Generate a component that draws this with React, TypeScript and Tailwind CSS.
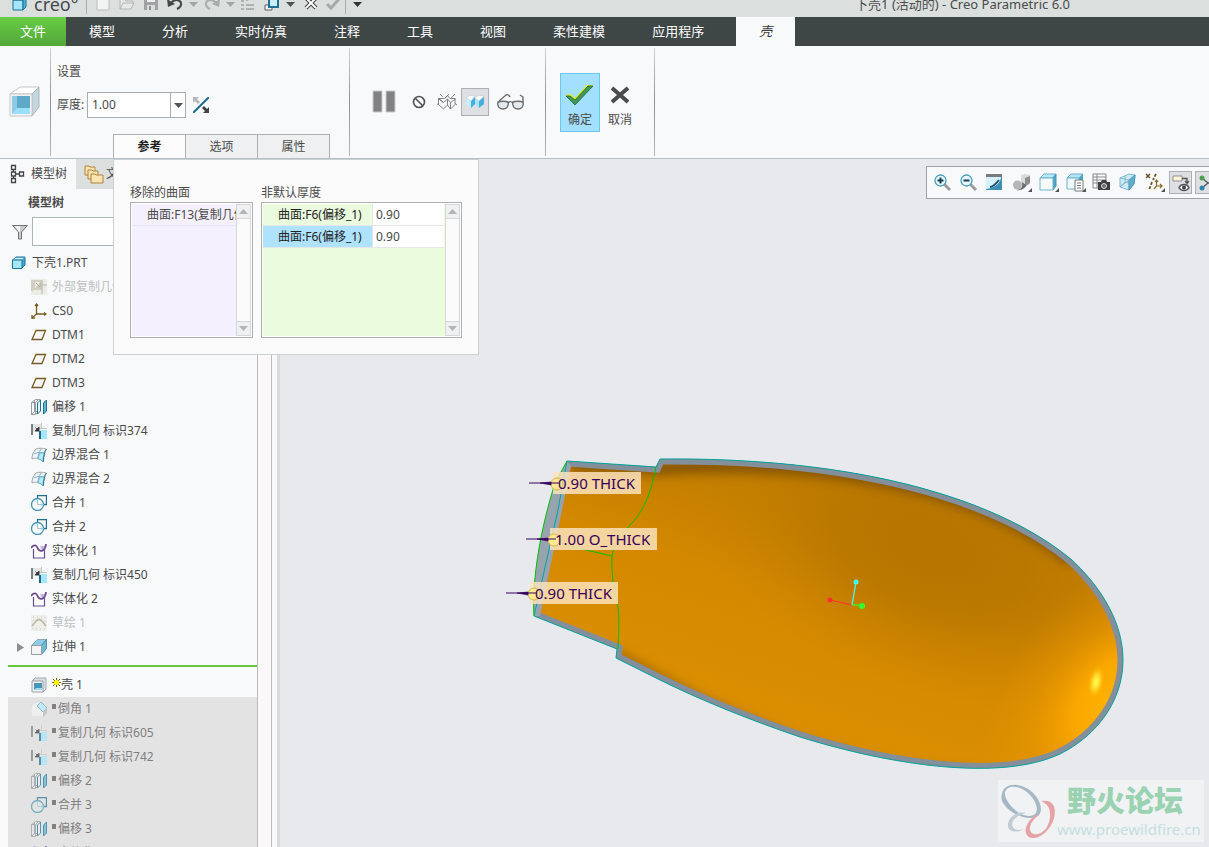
import type { ReactNode } from 'react';

export default function App() {
  return (
    <div className="flex h-screen flex-col overflow-hidden bg-[#f8f9fb] font-['Noto_Sans','Noto_Sans_CJK_SC',sans-serif] text-xs text-[#4a4a4a]">
      <TitleBar />
      <MenuBar />
      <Ribbon />
      <div className="flex min-h-0 flex-1">
        <Sidebar />
        <Viewport />
      </div>
    </div>
  );
}

/* ---------- Title bar ---------- */

function TitleBar() {
  return (
    <header className="flex h-[17px] shrink-0 items-end bg-[#dbe0df]">
      <div className="flex h-[26px] w-full items-center">
        <svg width="16" height="16" viewBox="0 0 16 16" className="ml-3 shrink-0">
          <path d="M1 4h10v10H1z" fill="#a6e6fb" stroke="#1b7396" />
          <path d="M11 4l3-3v10l-3 3z" fill="#4fb3d8" stroke="#1b7396" />
          <path d="M1 4l3-3h10l-3 3z" fill="#d5f3fc" stroke="#1b7396" />
        </svg>
        <span className="ml-[6px] w-[52px] text-[18px] leading-5 text-[#45494b]">creo°</span>
        <Divider />
        <QuickButton label="新建" className="ml-2">
          <path d="M2 0h12v14H2z" fill="#f3f3f3" stroke="#b9bcbc" />
        </QuickButton>
        <QuickButton label="打开" className="ml-2">
          <path d="M1 13V3h5l1 2h7v3M1 13l3-6h11l-3 6z" fill="#e6e8e8" stroke="#b4b8b8" />
        </QuickButton>
        <QuickButton label="保存" className="ml-2">
          <path d="M1 0h14v14H1z" fill="#9fa2a3" />
          <path d="M4 0h8v6H4z" fill="#eceeee" />
          <path d="M4 9h8v5H4z" fill="#d9dcdc" />
          <path d="M6 10h2v4H6z" fill="#8c8f90" />
        </QuickButton>
        <QuickButton label="撤消" className="ml-2">
          <path d="M4 7c4-5 11-3 10 2-.4 2-2 3-4 4" fill="none" stroke="#44484a" strokeWidth="2" />
          <path d="M0 3l1 8 7-3z" fill="#44484a" />
        </QuickButton>
        <Caret className="ml-[6px] text-[#a3a7a7]" />
        <QuickButton label="重做" className="ml-[6px]">
          <path d="M12 7C8 2 1 4 2 9c.4 2 2 3 4 4" fill="none" stroke="#a9adad" strokeWidth="2" />
          <path d="M16 3l-1 8-7-3z" fill="#a9adad" />
        </QuickButton>
        <Caret className="ml-[6px] text-[#a3a7a7]" />
        <QuickButton label="重新生成" className="ml-1">
          <path d="M2 9h3M2 13h3M7 9h8M7 13h8M2 5h3M8 5c1-4 6-4 7-1" fill="none" stroke="#adb1b1" strokeWidth="2" />
        </QuickButton>
        <QuickButton label="窗口" className="ml-[9px]">
          <path d="M1 9h7v5H1z" fill="#f4f4f4" stroke="#5c6062" />
          <path d="M5 3h9v8H5z" fill="#c9eefb" stroke="#1f6f93" strokeWidth="2" />
        </QuickButton>
        <Caret className="ml-[6px] text-[#505456]" />
        <QuickButton label="关闭" className="ml-2">
          <path d="M3 2l10 10M13 2L3 12" stroke="#3f4345" strokeWidth="4" />
          <path d="M3 2l10 10M13 2L3 12" stroke="#fff" strokeWidth="2" />
        </QuickButton>
        <QuickButton label="完成" className="ml-[6px]">
          <path d="M2 8l4 4 8-9" fill="none" stroke="#a6aaaa" strokeWidth="3" />
        </QuickButton>
        <div className="ml-1">
          <Divider />
        </div>
        <Caret className="ml-[7px] text-[#303436]" />
        <span className="mr-[139px] ml-auto text-[13px] leading-5 whitespace-nowrap">
          下壳1 (活动的) - Creo Parametric 6.0
        </span>
      </div>
    </header>
  );
}

function Divider() {
  return <div className="h-5 w-px bg-[#a9adae]" />;
}

function QuickButton({ label, className, children }: { label: string; className: string; children: ReactNode }) {
  return (
    <button aria-label={label} className={`shrink-0 ${className}`}>
      <svg width="16" height="16" viewBox="0 0 16 16">
        {children}
      </svg>
    </button>
  );
}

function Caret({ className }: { className: string }) {
  return (
    <svg width="9" height="5" viewBox="0 0 9 5" className={`shrink-0 ${className}`}>
      <path d="M0 0h9L4.500 5z" fill="currentColor" />
    </svg>
  );
}

/* ---------- Menu ---------- */

const MENU = ['模型', '分析', '实时仿真', '注释', '工具', '视图', '柔性建模', '应用程序'];

function MenuBar() {
  return (
    <nav className="flex h-[29px] shrink-0 bg-[#3e4646] text-[13px] text-white">
      <button className="bg-gradient-to-b from-[#68cc45] to-[#52a838] px-5">文件</button>
      {MENU.map((item) => (
        <button key={item} className="pr-6 pl-[23px]">
          {item}
        </button>
      ))}
      <button className="ml-2 bg-[#f8f9fb] px-[23px] text-[#3c3c3c] italic">壳</button>
    </nav>
  );
}

/* ---------- Ribbon ---------- */

function Separator() {
  return <div className="my-[2px] w-px bg-gradient-to-b from-[#cfd1d3] via-[#8f9294] to-[#b5b8ba]" />;
}

function Ribbon() {
  return (
    <section className="flex h-[113px] shrink-0 border-b border-[#b3bfc2]">
      <div className="flex w-[50px] items-center justify-center">
        <svg width="32" height="32" viewBox="0 0 32 32">
          <path d="M1 8L11 1h19l-7 7z" fill="#fff" stroke="#c3c6c8" />
          <path d="M23 8l7-7v20l-7 9z" fill="#c4d6de" stroke="#aab6bb" />
          <path d="M1 8h22v22H1z" fill="#f4f4f5" stroke="#c6c6c8" />
          <path d="M3 10h18v18H3z" fill="#8fc9e4" />
          <path d="M8 10h13v12H8z" fill="#5fa9c8" />
          <path d="M3 28l5-6h13v6z" fill="#9be0fb" />
        </svg>
      </div>
      <Separator />

      {/* Settings */}
      <div className="flex flex-col pt-[17px] pr-[19px] pl-[6px]">
        <h2 className="leading-[18px]">设置</h2>
        <div className="mt-[11px] flex h-[26px] items-center">
          <label htmlFor="thickness" className="w-[30px]">
            厚度:
          </label>
          <div className="flex h-full border border-[#a9acae] bg-white">
            <input id="thickness" defaultValue="1.00" className="w-[82px] px-1 outline-none" />
            <button aria-label="厚度列表" className="flex w-[15px] items-center justify-center border-l border-[#a9acae]">
              <Caret className="text-[#505456]" />
            </button>
          </div>
          <button aria-label="反向" className="ml-[7px]">
            <svg width="16" height="16" viewBox="0 0 16 16">
              <path d="M0 16L16 0" stroke="#1c6b8c" strokeWidth="2" />
              <path d="M0 0h6L4 2l3 3-2 2-3-3-2 2z" fill="#b5b7b8" />
              <path d="M16 16h-6l2-2-3-3 2-2 3 3 2-2z" fill="#3f4345" />
            </svg>
          </button>
        </div>
        <div className="relative mt-auto ml-[56px]">
          <div className="flex" role="tablist">
            <PanelTab label="参考" active />
            <PanelTab label="选项" />
            <PanelTab label="属性" />
            <div className="border-l border-[#adafb0]" />
          </div>
          <ReferencePanel />
        </div>
      </div>
      <Separator />

      {/* Preview controls */}
      <div className="flex items-center pr-3 pl-[22px]">
        <button aria-label="暂停" className="mr-[9px]">
          <svg width="24" height="24" viewBox="0 0 24 24">
            <path d="M1 1h9v21H1zM14 1h9v21h-9z" fill="#828284" stroke="#c9c9cb" />
          </svg>
        </button>
        <button aria-label="无预览" className="flex size-7 items-center justify-center">
          <svg width="14" height="14" viewBox="0 0 14 14" fill="none" stroke="#505456" strokeWidth="1.600">
            <circle cx="7" cy="7" r="5.500" />
            <path d="M3.500 3.500l7 7" />
          </svg>
        </button>
        <button aria-label="分离" className="flex size-7 items-center justify-center">
          <svg width="20" height="18" viewBox="0 0 20 18" fill="none" stroke="#66696b" strokeWidth=".8">
            <path d="M1.500 5.500h6l3-3M1.500 5.500v6l5 4.500 4-4V6l-4 3.500zM10.500 6l3 3.500L18.500 6M13.500 9.500V16l4.500-4.500v-6h-5l-2.500-3M10.500 12l3 4M3 1l3 3M18 1l-4 4M0 11.500l2-1M20 12l-2-1.500M12 1l-4 4.500M6.500 9.500l-5-4" />
          </svg>
        </button>
        <button aria-label="连接" className="flex size-7 items-center justify-center border border-[#adb0b2] bg-[#dedfe2]">
          <svg width="20" height="16" viewBox="0 0 20 16">
            <path d="M1 4l5 3v7l-5-3z" fill="#c5effc" />
            <path d="M6 7l4-4v7l-4 4z" fill="#45aede" />
            <path d="M10 4l4 3v7l-4-4z" fill="#a9e5fa" />
            <path d="M14 7l5-4v7l-5 4z" fill="#45aede" />
            <path d="M1 3.500l4-2h5L6 7zM10 3.500l4-2h5L14 7z" fill="#fff" stroke="#b9c3c8" strokeWidth=".5" />
          </svg>
        </button>
        <button aria-label="检验" className="flex w-11 items-center justify-center">
          <svg width="28" height="18" viewBox="0 0 28 18" fill="#e3eaef" stroke="#6a6e71" strokeWidth="1.400">
            <path d="M1 9c2-1 8-1 10 0 1 5-2 7-5 7s-6-2-5-7zM16 9c2-1 8-1 10 0 1 5-2 7-5 7s-6-2-5-7z" />
            <path d="M2 8l7-6c2-1 3 0 4 2M11 10c2-2 3-2 5 0M26 9V4l-3-2" fill="none" />
          </svg>
        </button>
      </div>
      <Separator />

      <div className="flex items-center px-[14px]">
        <button className="flex h-[59px] w-10 flex-col items-center justify-end border border-[#6cc6f5] bg-[#a3dffe] pb-[2px]">
          <svg width="30" height="22" viewBox="0 0 30 22">
            <path d="M1 11l4-1 5 4L22 1h6L11 19z" fill="#e4ee00" />
            <path d="M1 12h4l5 4L23 2h5L10 21z" fill="#3d9957" stroke="#2c5f3c" strokeWidth=".8" />
          </svg>
          <span className="mt-[5px] leading-[18px]">确定</span>
        </button>
        <button className="flex h-[59px] w-10 flex-col items-center justify-end pb-[3px]">
          <svg width="20" height="18" viewBox="0 0 20 18">
            <path d="M2 2l16 14M18 2L2 16" stroke="#4b4b4d" strokeWidth="4" />
          </svg>
          <span className="mt-[7px] leading-[18px]">取消</span>
        </button>
      </div>
      <Separator />
    </section>
  );
}

function PanelTab({ label, active }: { label: string; active?: boolean }) {
  return (
    <button
      role="tab"
      aria-selected={!!active}
      className={`h-6 w-[72px] border-t border-l border-[#adafb0] ${
        active ? 'bg-[#fcfcfc] font-semibold text-[#1f1f1f]' : 'bg-[#eef0f2]'
      }`}
    >
      {label}
    </button>
  );
}

function ReferencePanel() {
  return (
    <div className="absolute top-full left-0 z-10 mt-px flex gap-2 border border-[#cdd1d3] bg-[#fbfbfb] px-4 pt-6 pb-4">
      <div>
        <h3 className="leading-[18px]">移除的曲面</h3>
        <div className="flex h-[136px] w-[123px] border border-[#adafb0] bg-white p-px">
          <ul className="min-w-0 flex-1 bg-[#f4f0fe]">
            <li className="h-[22px] overflow-hidden border-b border-[#e6e6f0] pl-[15px] leading-[21px] whitespace-nowrap">
              曲面:F13(复制几何)
            </li>
          </ul>
          <ScrollBar />
        </div>
      </div>
      <div>
        <h3 className="leading-[18px]">非默认厚度</h3>
        <div className="flex h-[136px] w-[201px] border border-[#adafb0] bg-white p-px">
          <div className="flex-1 bg-[#eafbde]">
            <table className="border-separate border-spacing-0 text-left text-[#222]">
              <tbody>
                <SurfaceRow name="曲面:F6(偏移_1)" value="0.90" />
                <SurfaceRow name="曲面:F6(偏移_1)" value="0.90" selected />
              </tbody>
            </table>
          </div>
          <ScrollBar />
        </div>
      </div>
    </div>
  );
}

function SurfaceRow({ name, value, selected }: { name: string; value: string; selected?: boolean }) {
  return (
    <tr>
      <td className={`w-[109px] border-b border-[#e4e8ea] pl-[15px] leading-[21px] ${selected ? 'bg-[#aee2ff]' : ''}`}>
        {name}
      </td>
      <td className="w-[72px] border-b border-l border-[#e4e8ea] bg-white pl-[3px] leading-[21px] text-[#4a4a4a]">
        {value}
      </td>
    </tr>
  );
}

function ScrollBar() {
  return (
    <div className="flex w-[15px] shrink-0 flex-col justify-between border border-[#d5d7d9] bg-[#fbfbfb]">
      <button aria-label="向上滚动" className="flex h-[14px] items-center justify-center border-b border-[#d5d7d9] bg-[#eff0f2]">
        <Caret className="rotate-180 text-[#b2b4b6]" />
      </button>
      <button aria-label="向下滚动" className="flex h-[14px] items-center justify-center border-t border-[#d5d7d9] bg-[#eff0f2]">
        <Caret className="text-[#b2b4b6]" />
      </button>
    </div>
  );
}

/* ---------- Model tree ---------- */

type Kind =
  | 'external'
  | 'csys'
  | 'plane'
  | 'offset'
  | 'copy'
  | 'blend'
  | 'merge'
  | 'solid'
  | 'sketch'
  | 'extrude'
  | 'shell'
  | 'chamfer';

interface TreeNode {
  kind: Kind;
  name: string;
  muted?: boolean;
  expandable?: boolean;
}

const ACTIVE: TreeNode[] = [
  { kind: 'external', name: '外部复制几何', muted: true },
  { kind: 'csys', name: 'CS0' },
  { kind: 'plane', name: 'DTM1' },
  { kind: 'plane', name: 'DTM2' },
  { kind: 'plane', name: 'DTM3' },
  { kind: 'offset', name: '偏移 1' },
  { kind: 'copy', name: '复制几何 标识374' },
  { kind: 'blend', name: '边界混合 1' },
  { kind: 'blend', name: '边界混合 2' },
  { kind: 'merge', name: '合并 1' },
  { kind: 'merge', name: '合并 2' },
  { kind: 'solid', name: '实体化 1' },
  { kind: 'copy', name: '复制几何 标识450' },
  { kind: 'solid', name: '实体化 2' },
  { kind: 'sketch', name: '草绘 1', muted: true },
  { kind: 'extrude', name: '拉伸 1', expandable: true },
];

const SUPPRESSED: TreeNode[] = [
  { kind: 'chamfer', name: '倒角 1' },
  { kind: 'copy', name: '复制几何 标识605' },
  { kind: 'copy', name: '复制几何 标识742' },
  { kind: 'offset', name: '偏移 2' },
  { kind: 'merge', name: '合并 3' },
  { kind: 'offset', name: '偏移 3' },
  { kind: 'solid', name: '实体化 3' },
];

const ICONS: Record<Kind, ReactNode> = {
  external: (
    <>
      <path d="M0 0h16v16H0z" fill="#ecece6" />
      <path d="M1 1v11M3 2h7v8H3zM11 1v14M11 6h5" fill="none" stroke="#c6c5b6" strokeWidth="1.500" />
      <path d="M5 4l4 4M9 4v4H5" stroke="#a9a899" fill="none" />
    </>
  ),
  csys: (
    <g fill="none" stroke="#7a5a22" strokeWidth="1.300">
      <path d="M5.500 1v10H15M5.500 11L1 15" />
      <path d="M4 3l1.500-2L7 3M13 9.500l2 1.500-2 1.500M1 12v3h3" />
    </g>
  ),
  plane: <path d="M5 3.500h9.500L11 12.500H1z" fill="none" stroke="#7a5a22" strokeWidth="1.300" />,
  offset: (
    <>
      <path d="M.5 3.500l4-3h5M.5 3.500v12h4l3-3M4.500 15.500v-12h-4M4.500 3.500l3-3M3.500 1.500v11h4M3.500 12.500l-3 3" fill="none" stroke="#8f9396" strokeWidth=".9" />
      <path d="M6.500 4L9.500 1v11l-3 3z" fill="#e3f4fa" stroke="#1f6f93" />
      <path d="M12.500 4L15.500 1v11l-3 3z" fill="#5fb4d8" stroke="#1f6f93" />
    </>
  ),
  copy: (
    <>
      <path d="M2 1h8v8H2z" fill="#e2e4e4" />
      <path d="M0 1h2v11H0z" fill="#7c8082" />
      <path d="M10.500 0v6M8 5.500h8" stroke="#c3c6c7" />
      <path d="M4.500 4.500l3 3M8 4v4H4z" stroke="#303436" fill="#303436" strokeWidth=".8" />
      <path d="M8 8h2v8H8z" fill="#1c6b8c" />
      <path d="M10 7h6v9h-6z" fill="#a6e6fb" />
    </>
  ),
  blend: (
    <>
      <path d="M5 2c3-1 7-1 10 0-2 3-3 8-3 13-2-3-7-5-11-3 0-4 1-7 4-10z" fill="#eef4f7" stroke="#a3a8ab" />
      <path d="M9 6c2-1 4 0 5 1-2 3-2 5-2 8-1-2-3-3-5-3 0-2 1-4 2-6z" fill="#b4e8fa" stroke="#5aa5c2" strokeWidth=".8" />
      <path d="M3 7c3-2 8-2 11 0M10 2C8 5 7 8 7 12" fill="none" stroke="#7fb3c8" />
      <path d="M15.500 2c-2 3-3 7-3 12.500" fill="none" stroke="#1f6f93" />
    </>
  ),
  merge: (
    <g fill="none">
      <path d="M6.500 3.500v-3h9v9h-3" stroke="#1f6f93" strokeWidth="1.300" />
      <circle cx="6.500" cy="9.500" r="6" stroke="#4a98b8" strokeWidth="1.300" />
      <path d="M6.500 4v5.500h6" stroke="#9dc9dc" />
    </g>
  ),
  solid: (
    <>
      <path d="M2.500 6v9h11V6" fill="#fff" stroke="#6b4a94" strokeWidth="1.200" />
      <path d="M9 3h5v4l-3 1z" fill="#c9b8de" />
      <path d="M0 5c4-5 6-2 7 1 2 3 7 3 8-5" fill="none" stroke="#6b4a94" strokeWidth="1.800" />
    </>
  ),
  sketch: (
    <>
      <path d="M0 0h16v16H0z" fill="#eeeeea" />
      <path d="M2 2h12v12H2z" fill="none" stroke="#c8c7bb" strokeDasharray="1 3" />
      <path d="M1 11l4-5c2-2 4-2 6 0l4 5" fill="none" stroke="#c0bda4" strokeWidth="1.800" />
    </>
  ),
  extrude: (
    <>
      <path d="M.5 6.500l6-6h9l-5 6z" fill="#8ecde6" stroke="#8fa9b3" />
      <path d="M10.500 6.500l5-6v9l-5 6z" fill="#6fb7d4" stroke="#4b8fab" />
      <path d="M.5 6.500h10v9H.5z" fill="#f5f5f5" stroke="#9a9ea1" />
    </>
  ),
  shell: (
    <>
      <path d="M1 4l3-3h11v11l-3 3" fill="#d8dfe3" stroke="#a4a9ac" />
      <path d="M1 4h11v11H1z" fill="#f2f2f2" stroke="#9da2a5" />
      <path d="M3 6h8v7H3z" fill="#4796b8" />
      <path d="M3 13l2-2h6v2z" fill="#9fdcf3" />
    </>
  ),
  chamfer: (
    <>
      <path d="M0 5l5-4h4l6 6v6l-3 3H0z" fill="#f4f4f4" stroke="#cbcdce" strokeWidth=".7" />
      <path d="M6 5l4-4 6 6-4 4z" fill="#b6ecfc" stroke="#69abc4" />
      <path d="M12 11v5l4-4V7z" fill="#b9bcbd" />
    </>
  ),
};

function TreeItem({ node, marker, dimmed }: { node: TreeNode; marker?: ReactNode; dimmed?: boolean }) {
  return (
    <li className={`flex h-6 items-center pl-[7px] whitespace-nowrap ${node.muted ? 'text-[#bdbfc0]' : ''}`}>
      <div className="flex w-4 shrink-0">
        {node.expandable && (
          <button aria-label={`展开 ${node.name}`}>
            <svg width="11" height="10" viewBox="0 0 11 10">
              <path d="M2 1v9l7-4.500z" fill="#8b8d8f" />
            </svg>
          </button>
        )}
      </div>
      <svg width="16" height="16" viewBox="0 0 16 16" className={`mr-[5px] shrink-0 ${dimmed ? 'opacity-70' : ''}`}>
        {ICONS[node.kind]}
      </svg>
      {marker}
      <span>{node.name}</span>
    </li>
  );
}

function Sidebar() {
  return (
    <aside className="flex w-[280px] shrink-0 bg-[#f8f9fb]">
      <div className="flex min-w-0 flex-1 flex-col">
        <div className="flex h-[30px] shrink-0" role="tablist">
          <button role="tab" aria-selected="true" className="flex w-[76px] items-center gap-[6px] pl-[10px] whitespace-nowrap">
            <svg width="15" height="20" viewBox="0 0 15 20" fill="none" stroke="#3f4345" strokeWidth="1.300">
              <path d="M1.500 1.500h4v4h-4zM1.500 8h4v4h-4zM9.500 8h4v4h-4zM1.500 14.500h4v4h-4zM3.500 5.500V8M3.500 12v2.500M5.500 10h4" />
            </svg>
            模型树
          </button>
          <button role="tab" aria-selected="false" className="flex flex-1 items-center gap-[2px] bg-[#dbe0df] pl-2 whitespace-nowrap">
            <svg width="20" height="20" viewBox="0 0 20 20" fill="#fae3ae" stroke="#ad8440">
              <path d="M1 2h4l1 1h5v8H1z" />
              <path d="M4 6h4l1 1h5v8H4z" />
              <path d="M7 10h4l1 1h7v8H7z" />
            </svg>
            文件夹浏览器
          </button>
        </div>
        <h2 className="flex h-7 shrink-0 items-center pl-7 font-semibold">模型树</h2>
        <div className="flex h-[29px] shrink-0 items-center pl-3">
          <svg width="16" height="16" viewBox="0 0 16 16" className="mr-1 shrink-0">
            <path d="M.5 1.500h15L9.500 8v7h-3V8z" fill="#c9cbcd" stroke="#6f7375" />
            <path d="M3 2h5v6H7z" fill="#f4f5f5" />
          </svg>
          <input aria-label="过滤模型树" className="h-full min-w-0 flex-1 border border-[#a9b8b5] bg-white px-1 outline-none" />
        </div>
        <ul className="mt-[5px] ml-2 min-h-0 flex-1 overflow-hidden">
          <li className="flex h-6 items-center gap-1 pl-1">
            <svg width="16" height="16" viewBox="0 0 16 16">
              <path d="M1 5l3-3h9v8l-3 3" fill="#3fa9d0" stroke="#1b7396" />
              <path d="M.5 5l3-2.500H13L10 5z" fill="#d5f3fc" stroke="#4a98b8" />
              <path d="M.5 5H10v8.500H.5z" fill="#a6e6fb" stroke="#1b7396" />
            </svg>
            <span>下壳1.PRT</span>
          </li>
          {ACTIVE.map((node) => (
            <TreeItem key={node.name} node={node} />
          ))}
          <li className="flex h-[14px] items-center" aria-hidden="true">
            <div className="h-[2px] flex-1 bg-[#63c644]" />
          </li>
          <TreeItem
            node={{ kind: 'shell', name: '壳 1' }}
            marker={
              <svg width="9" height="9" viewBox="0 0 9 9" className="mb-[6px] shrink-0">
                <path d="M4.500 0v9M0 4.500h9M1 1l7 7M8 1L1 8" stroke="#6b6800" />
                <circle cx="4.500" cy="4.500" r="2.500" fill="#fff200" />
              </svg>
            }
          />
          <li>
            <ul className="bg-[#e3e3e3] text-[#808080]">
              {SUPPRESSED.map((node) => (
                <TreeItem
                  key={node.name}
                  node={node}
                  dimmed
                  marker={<span className="mr-[2px] mb-[6px] h-[5px] w-1 bg-[#808080]" />}
                />
              ))}
            </ul>
          </li>
        </ul>
      </div>
      <div className="w-[15px] shrink-0 border-x border-[#bcbcbe] bg-[#faf8f9]" />
      <div className="w-[8px] shrink-0 border-r-[3px] border-[#d6dbdb]" />
    </aside>
  );
}

/* ---------- Graphics area ---------- */

const OUTLINE =
  'M567 461L656 467L660 459C840 457 990 492 1072 560C1104 590 1123 625 1123 660C1123 700 1098 735 1060 754C1000 782 890 765 800 737C750 720 700 700 658 679L616 658L617 649L534 616C532 590 537 540 555 483Z';

const LABELS = [
  { x: 553, y: 472, width: 88, text: '0.90 THICK', textX: 558, arrowX: 529 },
  { x: 550, y: 528, width: 107, text: '1.00 O_THICK', textX: 555, arrowX: 526 },
  { x: 530, y: 582, width: 88, text: '0.90 THICK', textX: 535, arrowX: 506 },
];

function Viewport() {
  return (
    <main className="relative min-w-0 flex-1 overflow-hidden bg-[#e8e9ed]">
      <svg viewBox="280 159 929 688" className="block h-full w-full" preserveAspectRatio="xMidYMid meet">
        <defs>
          <clipPath id="body">
            <path d={OUTLINE} />
          </clipPath>
          <linearGradient id="base" gradientUnits="userSpaceOnUse" x1="780" y1="460" x2="700" y2="720">
            <stop offset="0" stopColor="#bd7a00" />
            <stop offset=".45" stopColor="#d38800" />
            <stop offset="1" stopColor="#dc9000" />
          </linearGradient>
          <radialGradient id="shade" gradientUnits="userSpaceOnUse" cx="0" cy="0" r="1" gradientTransform="translate(930 550) rotate(20) scale(250 140)">
            <stop offset="0" stopColor="#b67500" />
            <stop offset=".4" stopColor="#b87700" stopOpacity=".85" />
            <stop offset="1" stopColor="#c98200" stopOpacity="0" />
          </radialGradient>
          <radialGradient id="glow" gradientUnits="userSpaceOnUse" cx="0" cy="0" r="1" gradientTransform="translate(1116 700) rotate(-50) scale(170 110)">
            <stop offset="0" stopColor="#ffb400" />
            <stop offset=".3" stopColor="#ffab00" stopOpacity=".9" />
            <stop offset=".6" stopColor="#f09c00" stopOpacity=".45" />
            <stop offset="1" stopColor="#e09200" stopOpacity="0" />
          </radialGradient>
          <radialGradient id="spot">
            <stop offset="0" stopColor="#ffff50" />
            <stop offset=".4" stopColor="#ffec3c" stopOpacity=".8" />
            <stop offset="1" stopColor="#ffb400" stopOpacity="0" />
          </radialGradient>
          <filter id="soft" x="-20%" y="-60%" width="140%" height="220%">
            <feGaussianBlur stdDeviation="6" />
          </filter>
        </defs>

        <g clipPath="url(#body)">
          <path d={OUTLINE} fill="url(#base)" />
          <path d={OUTLINE} fill="url(#shade)" />
          <path d={OUTLINE} fill="url(#glow)" />
          <path d="M570 464L660 468C840 457 990 492 1072 560" fill="none" stroke="#7a4d00" strokeWidth="12" filter="url(#soft)" />
          <path d="M616 654L700 700C800 749 890 774 970 774" fill="none" stroke="#8f5a00" strokeWidth="7" filter="url(#soft)" />
          <ellipse cx="1096" cy="682" rx="8" ry="17" fill="url(#spot)" transform="rotate(12 1096 682)" />
          <path d={OUTLINE} fill="none" stroke="#838f9b" strokeWidth="11" />
          <path d="M567 461L571 466L560 520L540 616L534 616C532 590 537 540 555 483Z" fill="#98a3b0" />
        </g>
        <path
          d="M567 461L656 467L660 459C840 457 990 492 1072 560C1104 590 1123 625 1123 660C1123 700 1098 735 1060 754C1000 782 890 765 800 737C750 720 700 700 658 679L616 658L617 649L534 616L558 510L567 461"
          fill="none"
          stroke="#00a5a0"
        />
        <path
          d="M567 461L555 483C537 540 532 590 534 616M656 467C650 500 640 515 630 525C620 536 614 545 612 556C611 580 615 590 618 607C620 625 618 638 618 649M564 545L612 556"
          fill="none"
          stroke="#00c400"
        />

        {LABELS.map((l) => (
          <g key={l.y}>
            <rect x={l.x} y={l.y} width={l.width} height="22" fill="#fbe3bd" fillOpacity=".84" />
            <circle cx={l.x + 4} cy={l.y + 12} r="6" fill="#ffe993" stroke="#d6b34a" />
            <path d={`M${l.arrowX} ${l.y + 11}h30`} stroke="#36005c" />
            <path d={`M${l.arrowX + 11} ${l.y + 11}l11-1v3z`} fill="#36005c" stroke="#36005c" strokeWidth=".6" />
            <text x={l.textX} y={l.y + 17} fontSize="15" fill="#36005c">
              {l.text}
            </text>
          </g>
        ))}

        {/* Spin center */}
        <g strokeWidth="1.200">
          <path d="M852 605L830 600" stroke="#ff3030" />
          <path d="M852 605L856 582" stroke="#40ffff" />
          <path d="M852 605H862" stroke="#30ff30" />
        </g>
        <circle cx="830" cy="600" r="2.500" fill="#ff3030" />
        <circle cx="856" cy="582" r="2.500" fill="#40ffff" />
        <circle cx="862" cy="606" r="3" fill="#30ff30" />
      </svg>
      <ViewToolbar />
      <Watermark />
    </main>
  );
}

function ToolButton({ label, menu, children }: { label: string; menu?: boolean; children: ReactNode }) {
  return (
    <button aria-label={label} className={`flex h-full shrink-0 items-center justify-center ${menu ? 'w-[27px]' : 'w-[26px]'}`}>
      <svg width="22" height="20" viewBox="-3 -1 22 20">
        {children}
        {menu && <path d="M19 14v4h-4z" fill="#505456" />}
      </svg>
    </button>
  );
}

function ViewToolbar() {
  return (
    <div className="absolute top-[7px] right-0 flex h-[33px] w-[283px] items-center overflow-hidden border border-r-0 border-[#9fa4a4] bg-[#f8f9fb] pl-[2px]">
      <ToolButton label="放大">
        <path d="M10 10l6 6" stroke="#9c9c9c" strokeWidth="3" />
        <circle cx="6.500" cy="6.500" r="5.500" fill="#e9f6fb" stroke="#4a9ebd" strokeWidth="1.300" />
        <path d="M6.500 3.500v6M3.500 6.500h6" stroke="#123f55" strokeWidth="2" />
      </ToolButton>
      <ToolButton label="缩小">
        <path d="M10 10l6 6" stroke="#9c9c9c" strokeWidth="3" />
        <circle cx="6.500" cy="6.500" r="5.500" fill="#e9f6fb" stroke="#4a9ebd" strokeWidth="1.300" />
        <path d="M3.500 6.500h6" stroke="#123f55" strokeWidth="2" />
      </ToolButton>
      <ToolButton label="重画">
        <path d="M0 0h16v16H0z" fill="#3f8fb3" />
        <path d="M0 3h15c0 5-5 11-15 12z" fill="#d5f0fa" />
        <path d="M0 0h16v3H0z" fill="#777b7e" />
        <path d="M4 13c3 0 5-2 9-7" fill="none" stroke="#16506b" strokeWidth="2" />
      </ToolButton>
      <ToolButton label="着色" menu>
        <path d="M8 1l4-1 5 1v8l-5 3-4-2z" fill="#d9dadb" />
        <path d="M12 4l5-2v7l-5 4z" fill="#8b8d8f" />
        <circle cx="4.500" cy="11" r="4.500" fill="#b4b6b8" />
        <path d="M3 16c6 0 7-4 6-8l4 3c0 3-5 6-10 5z" fill="#6a6d70" />
      </ToolButton>
      <ToolButton label="显示样式" menu>
        <path d="M0 4l4-4h12l-3 4z" fill="#b9eafa" stroke="#71b2cb" />
        <path d="M13 4l3-4v12l-3 4z" fill="#4aa5cb" stroke="#4a98b8" />
        <path d="M0 4h13v12H0z" fill="#f6fcfe" stroke="#71b2cb" />
      </ToolButton>
      <ToolButton label="已保存方向" menu>
        <path d="M0 4l4-4h12l-4 4z" fill="#b4e5f5" stroke="#71b2cb" />
        <path d="M12 4l4-4v9h-4z" fill="#4aa5cb" />
        <path d="M0 4h12v11H0z" fill="#f1fafd" stroke="#71b2cb" />
        <path d="M8 6h8v11H8z" fill="#fff" stroke="#76797b" />
        <path d="M10 9h4M10 11.500h4M10 14h4" stroke="#76797b" />
      </ToolButton>
      <ToolButton label="视图管理器">
        <path d="M0 0h13v14H0z" fill="#fff" stroke="#85888a" />
        <path d="M0 3h13M0 6h13M0 9h13M4 0v14" stroke="#85888a" />
        <path d="M5 8h3l1-2h4l1 2h3v8H5z" fill="#3c4042" />
        <circle cx="11" cy="12" r="2.500" fill="#6d7072" stroke="#d7d9da" />
      </ToolButton>
      <ToolButton label="透视图">
        <path d="M1 4l9-4 6 1-1 9-5 6-9-3z" fill="#cdeaf5" stroke="#7fb6cc" />
        <path d="M10 6l6-5-1 9-5 6z" fill="#5fb0d0" stroke="#4a98b8" />
        <path d="M1 4l9 2v10M1 13l5-5 9 2M6 8V2M1 13l9-7" fill="none" stroke="#6fabc4" strokeWidth=".7" />
      </ToolButton>
      <ToolButton label="基准显示" menu>
        <path d="M0 0l4 4M4 0L0 4" stroke="#6b5424" strokeWidth="1.500" />
        <path d="M10 0L7 6M6 8l-3 8" stroke="#6b5424" strokeWidth="1.800" strokeDasharray="3 1.500" />
        <path d="M10.500 6v6H16M10.500 12L8 15M9 8l1.500-2L12 8M14 10l2 2-2 2" fill="none" stroke="#8a6a28" strokeWidth="1.200" />
      </ToolButton>
      <button aria-label="注释显示" className="ml-[2px] flex h-[23px] w-[23px] shrink-0 items-center justify-center border border-[#adb0b2] bg-[#dedfe2]">
        <svg width="18" height="18" viewBox="0 0 18 18">
          <path d="M1 2h9v5H1z" fill="#fff4d6" stroke="#8d8f91" />
          <path d="M10 4.500h5V9M13 7l2 2.500L17 7" fill="none" stroke="#505456" strokeWidth="1.300" />
          <path d="M7 13.500c2-4 8-4 10 0-2 4-8 4-10 0z" fill="#fff" stroke="#505456" strokeWidth="1.500" />
          <circle cx="12" cy="13.500" r="2" fill="#3c4042" />
        </svg>
      </button>
      <button aria-label="旋转中心" className="ml-[3px] flex h-[23px] w-[23px] shrink-0 items-center border border-[#adb0b2] bg-[#dedfe2] pl-[3px]">
        <svg width="18" height="18" viewBox="0 0 18 18">
          <path d="M3 4l6 5-6 5M9 9h8" fill="none" stroke="#505456" strokeWidth="1.300" />
          <circle cx="3" cy="4" r="2.500" fill="#4f9f52" />
          <circle cx="3" cy="14" r="2.500" fill="#2f87ad" />
        </svg>
      </button>
    </div>
  );
}

function Watermark() {
  return (
    <div className="absolute right-[5px] bottom-[5px] flex h-[62px] w-[206px] items-center bg-[#f0f2f3]">
      <svg width="58" height="58" viewBox="0 0 58 58" className="ml-px shrink-0">
        <g fillRule="evenodd">
          <path
            d="M3 12C5 0 22 0 33 10c10 9 12 22 4 25-8 3-20-1-28-8C4 22 1 17 3 12zM6 10c-1 6 5 15 14 21 7 4 14 4 17 0 3-6-2-15-9-21C20 3 8 3 6 10z"
            fill="#a6b8c6"
          />
          <path
            d="M42 19c12-2 16 6 13 17-3 12-14 21-22 20-6-1-8-7-5-13 3-7 10-11 12-10-5 3-10 10-9 15 2 7 12 5 17-3 5-9 5-22-6-26z"
            fill="#e5a3a8"
          />
          <path d="M27 31c-8-2-17 3-18 11-1 6 5 9 12 7l6-3c-5 3-13 3-14-3 0-6 6-10 14-12z" fill="#c2ccd4" />
        </g>
      </svg>
      <div className="flex flex-col">
        <span className="pl-[10px] text-[29px] leading-9 font-black text-[#9ad2b2]">野火论坛</span>
        <span className="text-[15px] leading-5 text-[#c6dfe1]">www.proewildfire.cn</span>
      </div>
    </div>
  );
}
